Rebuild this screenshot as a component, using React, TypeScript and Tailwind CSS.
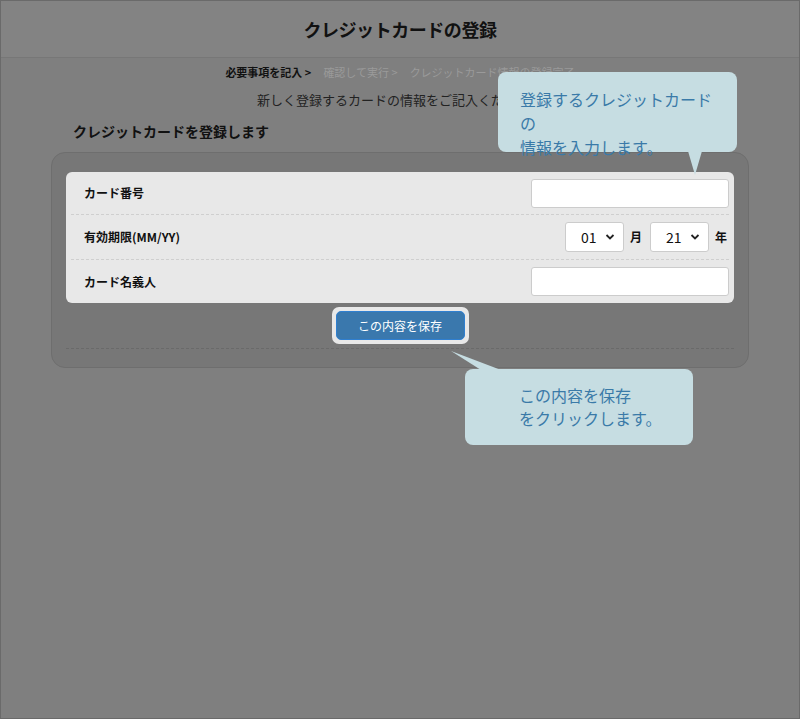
import React from 'react';

const font = { fontFamily: '"Noto Sans CJK JP", "Noto Sans", sans-serif' };

const App: React.FC = () => {
  return (
    <div className="relative h-[719px] w-[800px] overflow-hidden border border-[#6a6a6a] bg-[#7f7f7f] text-[#111]" style={font}>
      <header className="flex h-[57px] items-center justify-center border-b border-[#777] bg-[#838383]">
        <h1 className="text-[18px] font-bold tracking-tight">クレジットカードの登録</h1>
      </header>

      <div className="mt-[6px] flex justify-center gap-3 text-[11px]">
        <span className="font-bold">必要事項を記入 &gt;</span>
        <span className="text-[#9a9a9a]">確認して実行 &gt;</span>
        <span className="text-[#9a9a9a]">クレジットカード情報の登録完了</span>
      </div>
      <p className="mt-[9px] text-center text-[13px] text-[#222]">新しく登録するカードの情報をご記入ください。</p>

      <h2 className="mt-[12px] pl-[72px] text-[14px] font-bold">クレジットカードを登録します</h2>

      <div className="mx-[50px] mt-[10px] h-[216px] rounded-[14px] border border-[#6e6e6e] bg-[#777] px-[14px] pt-[19px]">
        <div className="rounded-[6px] bg-[#e8e8e8] px-[5px] text-[12px] font-bold">
          <div className="flex h-[43px] items-center justify-between border-b border-dashed border-[#cfcfcf] pl-[13px]">
            <span>カード番号</span>
            <div className="h-[29px] w-[198px] rounded-[3px] border border-[#ccc] bg-white" />
          </div>
          <div className="flex h-[45px] items-center justify-between border-b border-dashed border-[#cfcfcf] pl-[13px]">
            <span>有効期限(MM/YY)</span>
            <div className="flex items-center gap-[6px]">
              {['01', '21'].map((v, i) => (
                <React.Fragment key={v}>
                  <div className="flex h-[30px] w-[59px] items-center justify-between rounded-[3px] border border-[#ccc] bg-white pl-[15px] pr-[8px] font-normal text-[14px]">
                    <span>{v}</span>
                    <svg width="10" height="8" viewBox="0 0 10 8"><path d="M1.5 2l3.5 3.5L8.5 2" stroke="#222" strokeWidth="1.8" fill="none" /></svg>
                  </div>
                  <span className="mr-[2px]">{i === 0 ? '月' : '年'}</span>
                </React.Fragment>
              ))}
            </div>
          </div>
          <div className="flex h-[43px] items-center justify-between pl-[13px]">
            <span>カード名義人</span>
            <div className="h-[29px] w-[198px] rounded-[3px] border border-[#ccc] bg-white" />
          </div>
        </div>
        <div className="flex justify-center pt-[4px]">
          <div className="rounded-[7px] bg-[#e8e8e8] p-[4px]">
            <button className="h-[29px] w-[129px] rounded-[5px] border border-[#2f7fd0] bg-[#3a78ad] text-[12px] text-white">この内容を保存</button>
          </div>
        </div>
        <div className="mt-[4px] border-b border-dashed border-[#6a6a6a]" />
      </div>

      <div className="absolute left-[497px] top-[71px] h-[80px] w-[239px] rounded-[8px] bg-[#c6dde2] px-[22px] pt-[15px] text-[16px] leading-[24px] text-[#3a7aa8]">
        登録するクレジットカードの<br />情報を入力します。
        <svg className="absolute left-[190px] top-[79px]" width="14" height="24" viewBox="0 0 14 24"><path d="M0 0h14L7 24z" fill="#c6dde2" /></svg>
      </div>

      <div className="absolute left-[464px] top-[368px] h-[76px] w-[228px] rounded-[8px] bg-[#c6dde2] pl-[54px] pt-[15px] text-[16px] leading-[23px] text-[#3a7aa8]">
        この内容を保存<br />をクリックします。
        <svg className="absolute left-[-14px] top-[-18px]" width="50" height="20" viewBox="0 0 50 20"><path d="M0 0L30 19h20z" fill="#c6dde2" /></svg>
      </div>
    </div>
  );
};

export default App;
